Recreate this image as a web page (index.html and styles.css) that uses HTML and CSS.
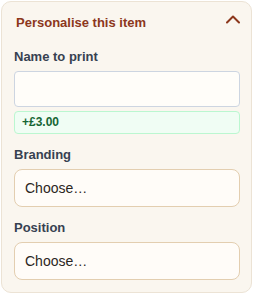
FILE: index.html
```html
<!DOCTYPE html>
<html lang="en">
<head>
<meta charset="utf-8">
<title>Personalise this item</title>
<link rel="stylesheet" href="styles.css">
</head>
<body>
  <section class="card">
    <header class="card-header">
      <h2 class="card-title">Personalise this item</h2>
      <svg class="chevron" width="14" height="10" viewBox="0 0 14 10" aria-hidden="true">
        <polyline points="1,8.5 7,2.5 13,8.5" fill="none" stroke="currentColor" stroke-width="2" stroke-linecap="round" stroke-linejoin="round"/>
      </svg>
    </header>
    <div class="card-body">
      <div class="field">
        <label class="field-label" for="name">Name to print</label>
        <input class="text-input" id="name" type="text">
        <div class="price-badge">+£3.00</div>
      </div>
      <div class="field">
        <label class="field-label">Branding</label>
        <div class="select-box">Choose…</div>
      </div>
      <div class="field">
        <label class="field-label">Position</label>
        <div class="select-box">Choose…</div>
      </div>
    </div>
  </section>
</body>
</html>
```

FILE: styles.css
```css
* { box-sizing: border-box; }

html, body {
  margin: 0;
  background: #ffffff;
}

body {
  padding: 1px;
  font-family: "Liberation Sans", Arial, sans-serif;
}

.card {
  width: 251px;
  background: #faf6ef;
  border: 1px solid #ece3d5;
  border-radius: 10px;
}

.card-header {
  display: flex;
  justify-content: space-between;
  align-items: flex-start;
  padding: 10px 11px 15px 14px;
}

.card-title {
  margin: 0;
  font-size: 13px;
  line-height: 21px;
  font-weight: 700;
  color: #8c371c;
}

.chevron {
  display: block;
  margin-top: 2px;
  color: #8c371c;
}

.card-body {
  display: flex;
  flex-direction: column;
  gap: 12px;
  padding: 0 11px 12px 12px;
}

.field {
  display: flex;
  flex-direction: column;
}

.field-label {
  font-size: 13px;
  line-height: 17px;
  font-weight: 700;
  color: #374151;
  margin-bottom: 6px;
}

.text-input {
  display: block;
  width: 100%;
  height: 36px;
  margin: 0;
  background: #fffdf9;
  border: 1px solid #cdd5e1;
  border-radius: 4px;
  font: inherit;
  outline: none;
}

.price-badge {
  margin-top: 4px;
  padding: 3px 7px;
  font-size: 12px;
  line-height: 15px;
  font-weight: 700;
  color: #166534;
  background: #f0fdf4;
  border: 1px solid #bbf7d0;
  border-radius: 4px;
}

.select-box {
  display: flex;
  align-items: center;
  height: 38px;
  padding: 0 10px;
  font-size: 14px;
  color: #2b2622;
  background: #fffcf8;
  border: 1px solid #e3ceb0;
  border-radius: 8px;
}
```
